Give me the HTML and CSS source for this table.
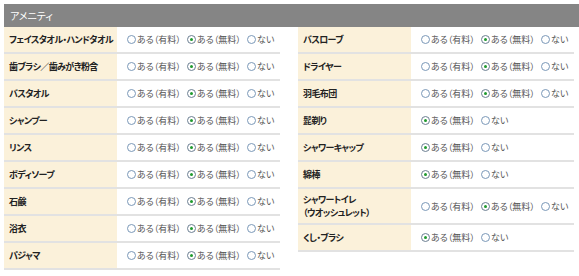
FILE: index.html
```html
<!DOCTYPE html>
<html lang="ja">
<head>
<meta charset="utf-8">
<link rel="stylesheet" href="styles.css">
</head>
<body>
<section class="amenity">
  <h2 class="header">アメニティ</h2>
  <div class="tables">
    <div class="table">
      <div class="row"><div class="label">フェイスタオル・ハンドタオル</div><div class="options"><label class="opt"><input type="radio" name="a1">ある（有料）</label><label class="opt"><input type="radio" name="a1" checked>ある（無料）</label><label class="opt"><input type="radio" name="a1">ない</label></div></div>
      <div class="row"><div class="label">歯ブラシ／歯みがき粉含</div><div class="options"><label class="opt"><input type="radio" name="a2">ある（有料）</label><label class="opt"><input type="radio" name="a2" checked>ある（無料）</label><label class="opt"><input type="radio" name="a2">ない</label></div></div>
      <div class="row"><div class="label">バスタオル</div><div class="options"><label class="opt"><input type="radio" name="a3">ある（有料）</label><label class="opt"><input type="radio" name="a3" checked>ある（無料）</label><label class="opt"><input type="radio" name="a3">ない</label></div></div>
      <div class="row"><div class="label">シャンプー</div><div class="options"><label class="opt"><input type="radio" name="a4">ある（有料）</label><label class="opt"><input type="radio" name="a4" checked>ある（無料）</label><label class="opt"><input type="radio" name="a4">ない</label></div></div>
      <div class="row"><div class="label">リンス</div><div class="options"><label class="opt"><input type="radio" name="a5">ある（有料）</label><label class="opt"><input type="radio" name="a5" checked>ある（無料）</label><label class="opt"><input type="radio" name="a5">ない</label></div></div>
      <div class="row"><div class="label">ボディソープ</div><div class="options"><label class="opt"><input type="radio" name="a6">ある（有料）</label><label class="opt"><input type="radio" name="a6" checked>ある（無料）</label><label class="opt"><input type="radio" name="a6">ない</label></div></div>
      <div class="row"><div class="label">石鹸</div><div class="options"><label class="opt"><input type="radio" name="a7">ある（有料）</label><label class="opt"><input type="radio" name="a7" checked>ある（無料）</label><label class="opt"><input type="radio" name="a7">ない</label></div></div>
      <div class="row"><div class="label">浴衣</div><div class="options"><label class="opt"><input type="radio" name="a8">ある（有料）</label><label class="opt"><input type="radio" name="a8" checked>ある（無料）</label><label class="opt"><input type="radio" name="a8">ない</label></div></div>
      <div class="row"><div class="label">パジャマ</div><div class="options"><label class="opt"><input type="radio" name="a9">ある（有料）</label><label class="opt"><input type="radio" name="a9" checked>ある（無料）</label><label class="opt"><input type="radio" name="a9">ない</label></div></div>
    </div>
    <div class="table">
      <div class="row"><div class="label">バスローブ</div><div class="options"><label class="opt"><input type="radio" name="b1">ある（有料）</label><label class="opt"><input type="radio" name="b1" checked>ある（無料）</label><label class="opt"><input type="radio" name="b1">ない</label></div></div>
      <div class="row"><div class="label">ドライヤー</div><div class="options"><label class="opt"><input type="radio" name="b2">ある（有料）</label><label class="opt"><input type="radio" name="b2" checked>ある（無料）</label><label class="opt"><input type="radio" name="b2">ない</label></div></div>
      <div class="row"><div class="label">羽毛布団</div><div class="options"><label class="opt"><input type="radio" name="b3">ある（有料）</label><label class="opt"><input type="radio" name="b3" checked>ある（無料）</label><label class="opt"><input type="radio" name="b3">ない</label></div></div>
      <div class="row"><div class="label">髭剃り</div><div class="options"><label class="opt"><input type="radio" name="b4" checked>ある（無料）</label><label class="opt"><input type="radio" name="b4">ない</label></div></div>
      <div class="row"><div class="label">シャワーキャップ</div><div class="options"><label class="opt"><input type="radio" name="b5" checked>ある（無料）</label><label class="opt"><input type="radio" name="b5">ない</label></div></div>
      <div class="row"><div class="label">綿棒</div><div class="options"><label class="opt"><input type="radio" name="b6" checked>ある（無料）</label><label class="opt"><input type="radio" name="b6">ない</label></div></div>
      <div class="row"><div class="label">シャワートイレ<br>（ウオッシュレット）</div><div class="options"><label class="opt"><input type="radio" name="b7">ある（有料）</label><label class="opt"><input type="radio" name="b7" checked>ある（無料）</label><label class="opt"><input type="radio" name="b7">ない</label></div></div>
      <div class="row"><div class="label">くし・ブラシ</div><div class="options"><label class="opt"><input type="radio" name="b8" checked>ある（無料）</label><label class="opt"><input type="radio" name="b8">ない</label></div></div>
    </div>
  </div>
</section>
</body>
</html>
```
FILE: styles.css
```css
html, body {
  margin: 0;
  padding: 0;
  background: #ffffff;
}
body {
  padding: 4px 0 0 4px;
  font-family: "Noto Sans CJK JP", "Noto Sans", sans-serif;
  font-feature-settings: "palt";
  overflow: hidden;
}
.header {
  margin: 0;
  height: 23px;
  line-height: 23px;
  padding-left: 6px;
  background: #858585;
  color: #ffffff;
  font-size: 10px;
  font-weight: normal;
}
.tables {
  display: flex;
  gap: 18px;
  align-items: flex-start;
}
.table {
  width: 276px;
  display: flex;
  flex-direction: column;
}
.row {
  display: flex;
  border-bottom: 2px solid #e2e2e2;
}
.label {
  width: 113px;
  flex: none;
  box-sizing: border-box;
  min-height: 25px;
  padding: 4px 5px;
  display: flex;
  align-items: center;
  background: #fbf1da;
  color: #222222;
  font-size: 9px;
  letter-spacing: -0.6px;
  white-space: nowrap;
  font-weight: bold;
  line-height: 13px;
}
.options {
  display: flex;
  align-items: center;
  padding-left: 10px;
  font-size: 9px;
  color: #555555;
}
.opt {
  display: flex;
  align-items: center;
  width: 60px;
}
.opt input {
  appearance: none;
  -webkit-appearance: none;
  margin: 0 1px 0 0;
  width: 9px;
  height: 9px;
  border: 1px solid #7a98b8;
  border-radius: 50%;
  background: #ffffff;
  box-sizing: border-box;
  position: relative;
  flex: none;
}
.opt input:checked {
  border-color: #6c7f92;
}
.opt input:checked::after {
  content: "";
  position: absolute;
  left: 2px;
  top: 2px;
  width: 3px;
  height: 3px;
  border-radius: 50%;
  background: #1f9a2e;
}
```
